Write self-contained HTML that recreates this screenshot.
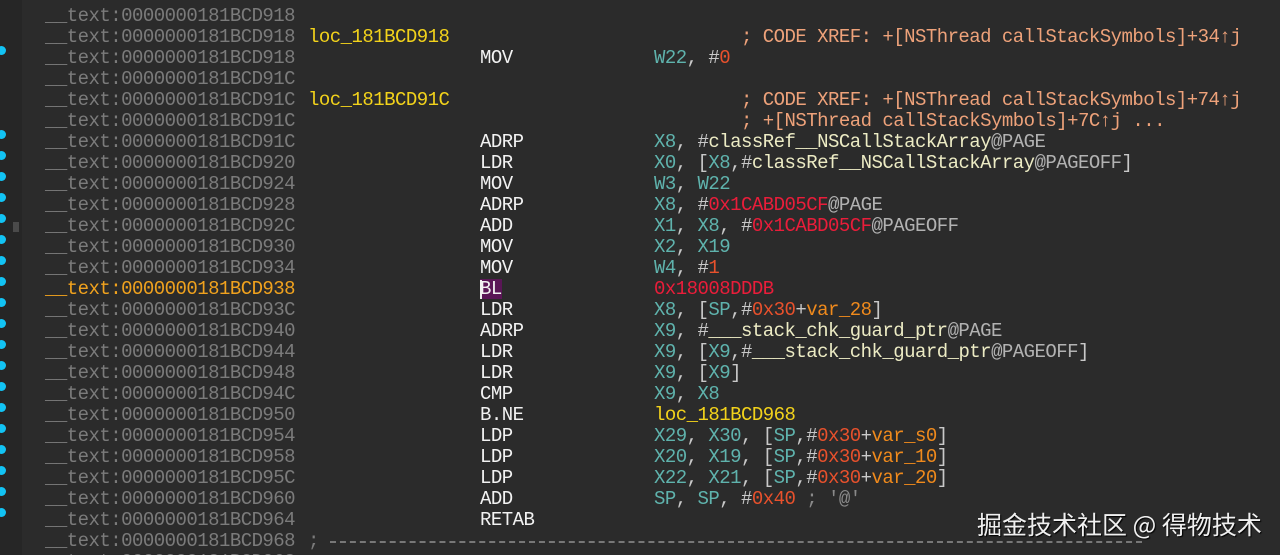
<!DOCTYPE html>
<html><head><meta charset="utf-8"><style>
html,body{margin:0;padding:0;width:1280px;height:555px;overflow:hidden;}
body{background:#2b2b2b;position:relative;font-family:"Liberation Mono","DejaVu Sans Mono",monospace;font-size:19px;letter-spacing:-0.53px;}
.gut{position:absolute;left:0;top:0;width:22px;height:555px;background:#262626;}
.wrap{position:absolute;left:0;top:3px;width:1280px;height:552px;overflow:hidden;}
.r{position:absolute;left:0;height:21px;line-height:21px;white-space:pre;width:1280px;}
.r span{position:absolute;top:0;}
.r i{font-style:normal;}
.a{left:45px;color:#7b7b7b;}
.l{left:308px;color:#f2d21b;}
.m{left:480px;color:#f2f2f2;}
.o{left:654px;color:#c8c8c8;}
.c{left:741px;color:#eea27a;}
.g{color:#5fb3ad}.s{color:#ecebc4}.p{color:#b2b2b2}.h{color:#ea1d3a}.n{color:#e8512c}.v{color:#f08a1c}.y{color:#f2d21b}
.dot{position:absolute;left:-3px;width:9px;height:9px;border-radius:50%;background:#12c3f4;}
.wm{position:absolute;left:977px;top:506px;font-family:"Noto Sans CJK SC","WenQuanYi Zen Hei",sans-serif;font-size:25px;letter-spacing:0;color:#f0f0f0;text-shadow:1px 1px 1px #000;white-space:nowrap;}
</style></head><body>
<div class="gut"></div>
<div style="position:absolute;left:13px;top:222px;width:6px;height:10px;background:#4a4a4a"></div>
<div style="position:absolute;left:0;top:408px;width:5px;height:2px;background:#bbb"></div>
<div class="wrap">
<div class="r" style="top:-18px"><span class="a">__text:0000000181BCD918</span></div>
<div class="r" style="top:3px"><span class="a">__text:0000000181BCD918</span></div>
<div class="r" style="top:24px"><span class="a">__text:0000000181BCD918</span><span class="l">loc_181BCD918</span><span class="c">; CODE XREF: +[NSThread callStackSymbols]+34↑j</span></div>
<div class="r" style="top:45px"><span class="a">__text:0000000181BCD918</span><span class="m">MOV</span><span class="o"><i class="g">W22</i>, #<i class="n">0</i></span></div>
<div class="r" style="top:66px"><span class="a">__text:0000000181BCD91C</span></div>
<div class="r" style="top:87px"><span class="a">__text:0000000181BCD91C</span><span class="l">loc_181BCD91C</span><span class="c">; CODE XREF: +[NSThread callStackSymbols]+74↑j</span></div>
<div class="r" style="top:108px"><span class="a">__text:0000000181BCD91C</span><span class="c">; +[NSThread callStackSymbols]+7C↑j ...</span></div>
<div class="r" style="top:129px"><span class="a">__text:0000000181BCD91C</span><span class="m">ADRP</span><span class="o"><i class="g">X8</i>, #<i class="s">classRef__NSCallStackArray</i><i class="p">@PAGE</i></span></div>
<div class="r" style="top:150px"><span class="a">__text:0000000181BCD920</span><span class="m">LDR</span><span class="o"><i class="g">X0</i>, [<i class="g">X8</i>,#<i class="s">classRef__NSCallStackArray</i><i class="p">@PAGEOFF</i>]</span></div>
<div class="r" style="top:171px"><span class="a">__text:0000000181BCD924</span><span class="m">MOV</span><span class="o"><i class="g">W3</i>, <i class="g">W22</i></span></div>
<div class="r" style="top:192px"><span class="a">__text:0000000181BCD928</span><span class="m">ADRP</span><span class="o"><i class="g">X8</i>, #<i class="h">0x1CABD05CF</i><i class="p">@PAGE</i></span></div>
<div class="r" style="top:213px"><span class="a">__text:0000000181BCD92C</span><span class="m">ADD</span><span class="o"><i class="g">X1</i>, <i class="g">X8</i>, #<i class="h">0x1CABD05CF</i><i class="p">@PAGEOFF</i></span></div>
<div class="r" style="top:234px"><span class="a">__text:0000000181BCD930</span><span class="m">MOV</span><span class="o"><i class="g">X2</i>, <i class="g">X19</i></span></div>
<div class="r" style="top:255px"><span class="a">__text:0000000181BCD934</span><span class="m">MOV</span><span class="o"><i class="g">W4</i>, #<i class="n">1</i></span></div>
<div class="r" style="top:276px"><span class="a" style="color:#f0a21e">__text:0000000181BCD938</span><span class="m" style="background:#5a1656;width:22px;height:20px;"></span><span style="left:480px;top:1px;width:2px;height:19px;background:#f0f0f0"></span><span class="m">BL</span><span class="o h">0x18008DDDB</span></div>
<div class="r" style="top:297px"><span class="a">__text:0000000181BCD93C</span><span class="m">LDR</span><span class="o"><i class="g">X8</i>, [<i class="g">SP</i>,#<i class="n">0x30</i>+<i class="v">var_28</i>]</span></div>
<div class="r" style="top:318px"><span class="a">__text:0000000181BCD940</span><span class="m">ADRP</span><span class="o"><i class="g">X9</i>, #<i class="s">___stack_chk_guard_ptr</i><i class="p">@PAGE</i></span></div>
<div class="r" style="top:339px"><span class="a">__text:0000000181BCD944</span><span class="m">LDR</span><span class="o"><i class="g">X9</i>, [<i class="g">X9</i>,#<i class="s">___stack_chk_guard_ptr</i><i class="p">@PAGEOFF</i>]</span></div>
<div class="r" style="top:360px"><span class="a">__text:0000000181BCD948</span><span class="m">LDR</span><span class="o"><i class="g">X9</i>, [<i class="g">X9</i>]</span></div>
<div class="r" style="top:381px"><span class="a">__text:0000000181BCD94C</span><span class="m">CMP</span><span class="o"><i class="g">X9</i>, <i class="g">X8</i></span></div>
<div class="r" style="top:402px"><span class="a">__text:0000000181BCD950</span><span class="m">B.NE</span><span class="o y">loc_181BCD968</span></div>
<div class="r" style="top:423px"><span class="a">__text:0000000181BCD954</span><span class="m">LDP</span><span class="o"><i class="g">X29</i>, <i class="g">X30</i>, [<i class="g">SP</i>,#<i class="n">0x30</i>+<i class="v">var_s0</i>]</span></div>
<div class="r" style="top:444px"><span class="a">__text:0000000181BCD958</span><span class="m">LDP</span><span class="o"><i class="g">X20</i>, <i class="g">X19</i>, [<i class="g">SP</i>,#<i class="n">0x30</i>+<i class="v">var_10</i>]</span></div>
<div class="r" style="top:465px"><span class="a">__text:0000000181BCD95C</span><span class="m">LDP</span><span class="o"><i class="g">X22</i>, <i class="g">X21</i>, [<i class="g">SP</i>,#<i class="n">0x30</i>+<i class="v">var_20</i>]</span></div>
<div class="r" style="top:486px"><span class="a">__text:0000000181BCD960</span><span class="m">ADD</span><span class="o"><i class="g">SP</i>, <i class="g">SP</i>, #<i class="n">0x40</i> <i style="color:#8a8a8a">; '@'</i></span></div>
<div class="r" style="top:507px"><span class="a">__text:0000000181BCD964</span><span class="m">RETAB</span></div>
<div class="r" style="top:528px"><span class="a">__text:0000000181BCD968</span><span style="left:308px;color:#7b7b7b">;</span><span style="left:330px;top:10px;width:812px;border-top:2px dashed #777;height:0"></span></div>
<div class="r" style="top:549px"><span class="a">__text:0000000181BCD968</span></div>
</div>

<div class="dot" style="top:46px"></div>
<div class="dot" style="top:130px"></div><div class="dot" style="top:151px"></div><div class="dot" style="top:172px"></div><div class="dot" style="top:193px"></div><div class="dot" style="top:214px"></div><div class="dot" style="top:235px"></div><div class="dot" style="top:256px"></div><div class="dot" style="top:277px"></div><div class="dot" style="top:298px"></div><div class="dot" style="top:319px"></div><div class="dot" style="top:340px"></div><div class="dot" style="top:361px"></div><div class="dot" style="top:382px"></div><div class="dot" style="top:403px"></div><div class="dot" style="top:424px"></div><div class="dot" style="top:445px"></div><div class="dot" style="top:466px"></div><div class="dot" style="top:487px"></div><div class="dot" style="top:508px"></div>

<div class="wm">掘金技术社区 @ 得物技术</div>
</body></html>
